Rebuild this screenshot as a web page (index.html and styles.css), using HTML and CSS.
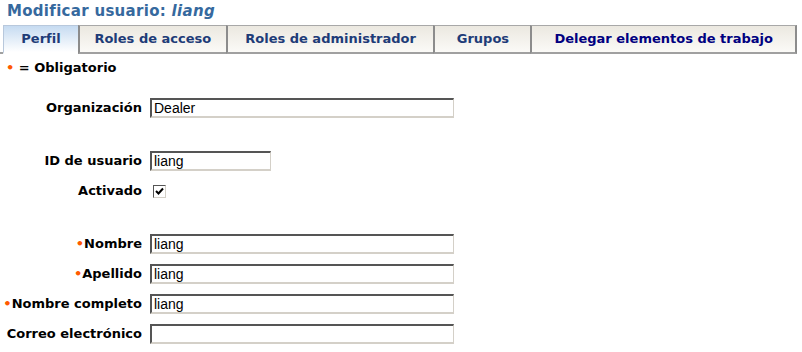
FILE: index.html
```html
<!DOCTYPE HTML>
<html lang="es">
<head>
	<title>Modificar usuario</title>
	<meta charset="UTF-8">
	<link rel="stylesheet" href="styles.css">
</head>
<body>

<h1 class="page-title">Modificar usuario: <em>liang</em></h1>

<ul class="tabs">
	<li class="tab active"><a href="#">Perfil</a></li>
	<li class="tab"><a href="#">Roles de acceso</a></li>
	<li class="tab"><a href="#">Roles de administrador</a></li>
	<li class="tab"><a href="#">Grupos</a></li>
	<li class="tab tab-last"><a href="#">Delegar elementos de trabajo</a></li>
</ul>

<p class="legend"><span class="req">&bull;</span> = Obligatorio</p>

<form class="user-form">
	<label class="lbl">Organización</label>
	<input class="field wide" type="text" value="Dealer">

	<div class="spacer"></div>

	<label class="lbl">ID de usuario</label>
	<input class="field short" type="text" value="liang">

	<label class="lbl">Activado</label>
	<span class="check-wrap">
		<span class="check">
			<svg width="9" height="9" viewBox="0 0 9 9"><path d="M1 4 L3.5 6.5 L8 1.5" fill="none" stroke="black" stroke-width="2"/></svg>
		</span>
	</span>

	<div class="spacer"></div>

	<label class="lbl"><span class="req">&bull;</span>Nombre</label>
	<input class="field wide" type="text" value="liang">

	<label class="lbl"><span class="req">&bull;</span>Apellido</label>
	<input class="field wide" type="text" value="liang">

	<label class="lbl"><span class="req">&bull;</span>Nombre completo</label>
	<input class="field wide" type="text" value="liang">

	<label class="lbl">Correo electrónico</label>
	<input class="field wide" type="text" value="">
</form>

</body>
</html>
```

FILE: styles.css
```css
	body {
		margin: 0;
		background-color: white;
		color: black;
		font-family: "DejaVu Sans", Verdana, sans-serif;
}
	.page-title {
		margin: 0;
		padding: 1px 0 0 7px;
		height: 24px;
		font-size: 15px;
		letter-spacing: 0.3px;
		font-weight: bold;
		color: #36699e;
		line-height: 21px;
}
	.page-title em {
		font-style: italic;
}

	.tabs {
		list-style-type: none;
		margin: 0 5px 0 0;
		padding: 0 0 0 3px;
		display: flex;
		border-bottom: 2px solid #a0a0a0;
		height: 27px;
}
	.tab {
		border-top: 1px solid #a8a8a8;
		border-left: 2px solid #8c8c8c;
		background: linear-gradient(#ebe8e0, #fbfaf7);
		margin-bottom: -2px;
		border-bottom: 2px solid #a0a0a0;
}
	.tab a {
		display: block;
		height: 26px;
		line-height: 26px;
		text-align: center;
		font-size: 13px;
		font-weight: bold;
		color: #1e3c78;
		text-decoration: none;
}
	.tab:nth-child(1) { width: 74px; }
	.tab:nth-child(2) { width: 146px; }
	.tab:nth-child(3) { width: 206px; }
	.tab:nth-child(4) { width: 95px; }
	.tab:nth-child(5) { width: 263px; }
	.tab-last {
		border-right: 2px solid #8c8c8c;
}
	.tab-last a {
		color: #000080;
}
	.tab.active {
		border-left: 1px solid #b8c8dc;
		border-top: 1px solid #b8c8dc;
		border-bottom: 2px solid white;
		background: linear-gradient(#c6dbf1, #ffffff);
}

	.legend {
		margin: 6px 0 0 6px;
		font-size: 13px;
		font-weight: bold;
		line-height: 16px;
}
	.req {
		color: #ff5a00;
}

	.user-form {
		display: grid;
		grid-template-columns: 142px auto;
		column-gap: 8px;
		align-items: center;
		justify-items: start;
		margin-top: 17px;
}
	.lbl {
		justify-self: end;
		height: 30px;
		line-height: 30px;
		font-size: 13px;
		font-weight: bold;
		white-space: nowrap;
}
	.spacer {
		grid-column: 1 / 3;
		height: 23px;
}
	.field {
		box-sizing: border-box;
		height: 20px;
		margin: 0;
		padding: 0 2px;
		border-top: 2px solid #555555;
		border-left: 2px solid #555555;
		border-right: 1px solid #d4d0c8;
		border-bottom: 2px solid #d4d0c8;
		font-family: "Liberation Sans", Arial, sans-serif;
		font-size: 14px;
		color: black;
		background: white;
}
	.wide { width: 304px; }
	.short { width: 121px; }

	.check-wrap {
		padding-left: 3px;
		display: flex;
}
	.check {
		box-sizing: border-box;
		width: 13px;
		height: 13px;
		border-top: 1px solid #555555;
		border-left: 1px solid #555555;
		border-right: 1px solid #d4d0c8;
		border-bottom: 1px solid #d4d0c8;
		display: flex;
		align-items: center;
		justify-content: center;
}
```
